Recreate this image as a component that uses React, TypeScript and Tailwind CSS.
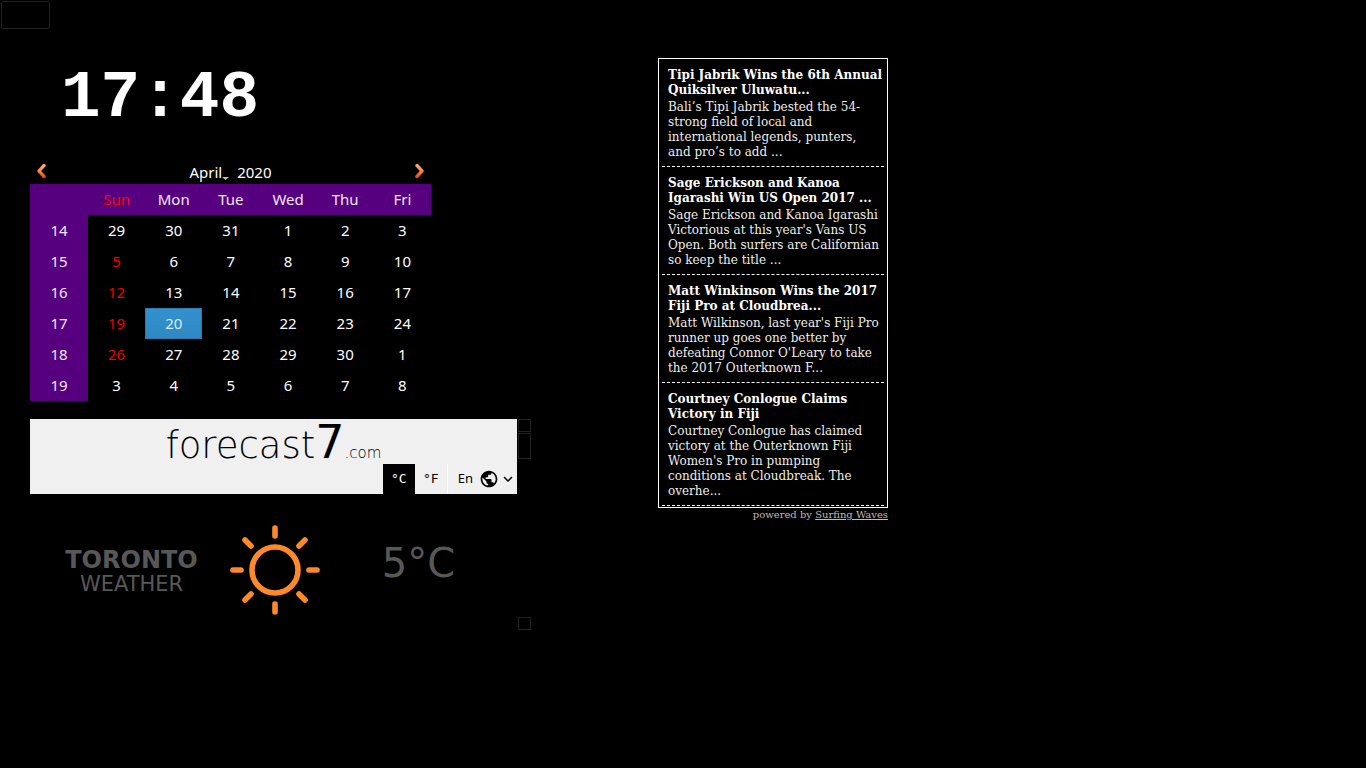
import { MdExpandMore, MdPublic } from "react-icons/md";

const days = ["Sun", "Mon", "Tue", "Wed", "Thu", "Fri"];

const weeks = [
  { week: 14, dates: [29, 30, 31, 1, 2, 3] },
  { week: 15, dates: [5, 6, 7, 8, 9, 10] },
  { week: 16, dates: [12, 13, 14, 15, 16, 17] },
  { week: 17, dates: [19, 20, 21, 22, 23, 24] },
  { week: 18, dates: [26, 27, 28, 29, 30, 1] },
  { week: 19, dates: [3, 4, 5, 6, 7, 8] },
];

const stories = [
  {
    title: "Tipi Jabrik Wins the 6th Annual Quiksilver Uluwatu...",
    body: "Bali’s Tipi Jabrik bested the 54-strong field of local and international legends, punters, and pro’s to add ...",
  },
  {
    title: "Sage Erickson and Kanoa Igarashi Win US Open 2017 ...",
    body: "Sage Erickson and Kanoa Igarashi Victorious at this year's Vans US Open. Both surfers are Californian so keep the title ...",
  },
  {
    title: "Matt Winkinson Wins the 2017 Fiji Pro at Cloudbrea...",
    body: "Matt Wilkinson, last year's Fiji Pro runner up goes one better by defeating Connor O'Leary to take the 2017 Outerknown F...",
  },
  {
    title: "Courtney Conlogue Claims Victory in Fiji",
    body: "Courtney Conlogue has claimed victory at the Outerknown Fiji Women's Pro in pumping conditions at Cloudbreak. The overhe...",
  },
];

function Chevron({ id, d }: { id: string; d: string }) {
  return (
    <svg width="12" height="16" viewBox="0 0 12 16" fill="none">
      <defs>
        <linearGradient id={id} x1="0" y1="0" x2="0" y2="16" gradientUnits="userSpaceOnUse">
          <stop offset="0" stopColor="#fbc08a" />
          <stop offset="0.5" stopColor="#f58a4a" />
          <stop offset="1" stopColor="#d63f10" />
        </linearGradient>
      </defs>
      <path d={d} stroke="#7a2c10" strokeWidth="4" strokeLinecap="round" strokeLinejoin="round" />
      <path d={d} stroke={`url(#${id})`} strokeWidth="3" strokeLinecap="round" strokeLinejoin="round" />
    </svg>
  );
}

function Calendar() {
  return (
    <section className="w-[401px] font-['Noto_Sans',sans-serif] text-[15px] text-white">
      <div className="flex h-6 items-center justify-between px-1.5">
        <button type="button" aria-label="Previous month" className="pb-0.5">
          <Chevron id="prev" d="M8 2.5 L3 8 L8 13.5" />
        </button>
        <div className="flex items-center gap-2">
          <button type="button" className="flex items-end">
            April
            <svg width="7" height="6" viewBox="0 0 7 6">
              <path d="M0 0H7L3.5 3Z" fill="#bdbdbd" />
            </svg>
          </button>
          <span>2020</span>
        </div>
        <button type="button" aria-label="Next month" className="pb-0.5">
          <Chevron id="next" d="M4 2.5 L9 8 L4 13.5" />
        </button>
      </div>
      <table className="w-full table-fixed border-collapse text-center">
        <thead>
          <tr className="h-[31px] bg-[#560080]">
            <th className="w-[58px] p-0" />
            {days.map((day) => (
              <th key={day} className={day === "Sun" ? "p-0 font-normal text-[#ff0000]" : "p-0 font-normal text-[#f0e8f5]"}>
                {day}
              </th>
            ))}
          </tr>
        </thead>
        <tbody>
          {weeks.map(({ week, dates }) => (
            <tr key={week} className="h-[31px]">
              <th className="bg-[#560080] p-0 font-normal text-[#f0e8f5]">{week}</th>
              {dates.map((date, i) => {
                const red = i === 0 && week > 14 && week < 19;
                const today = week === 17 && date === 20;
                return (
                  <td key={i} className={red ? "p-0 text-[#f00000]" : "p-0"}>
                    {today ? (
                      <div className="flex h-[31px] items-center justify-center border border-[#2a7ab0] bg-linear-to-b from-[#3391ce] to-[#2e89c2] text-[#d9ecf8]">
                        {date}
                      </div>
                    ) : (
                      date
                    )}
                  </td>
                );
              })}
            </tr>
          ))}
        </tbody>
      </table>
    </section>
  );
}

function Sun() {
  return (
    <svg width="90" height="90" viewBox="0 0 90 90" fill="none" stroke="#fc8a2b" strokeWidth="5.6" strokeLinecap="round">
      <circle cx="45" cy="45" r="23" />
      <path d="M45 3V11M45 79V87M3 45H11M79 45H87M15 15L21 21M69 69L75 75M15 75L21 69M69 21L75 15" />
    </svg>
  );
}

function Weather() {
  return (
    <section className="flex gap-px">
      <div className="w-[487px]">
        <header className="bg-[#f0f0f0] text-black">
          <h2 className="flex h-[45px] items-baseline justify-center font-['DejaVu_Sans',sans-serif] leading-[46px] font-extralight">
            <span className="text-[37px]">forecast</span>
            <span className="text-[46px] font-normal">7</span>
            <span className="text-[15px]">.com</span>
          </h2>
          <div className="flex h-[30px] justify-end font-['Noto_Sans',sans-serif] text-[13px]">
            <button type="button" className="w-8 bg-black font-['DejaVu_Sans_Mono',monospace] text-white">°C</button>
            <button type="button" className="w-8 font-['DejaVu_Sans_Mono',monospace]">°F</button>
            <button type="button" className="flex items-center border-l border-white pl-2.5">
              En
              <MdPublic className="ml-1.5 size-5" />
              <MdExpandMore className="size-[18px]" />
            </button>
          </div>
        </header>
        <div className="grid h-[136px] grid-cols-[1fr_90px_1fr] pt-[31px] pl-[3px] text-center font-['DejaVu_Sans',sans-serif] text-[#585858]">
          <h3 className="pt-[23px]">
            <span className="block text-[24px] leading-6 font-bold">TORONTO</span>
            <span className="block text-[21px] leading-6">WEATHER</span>
          </h3>
          <Sun />
          <p className="pt-4 text-[40px] leading-[44px]">5°C</p>
        </div>
      </div>
      <div className="flex w-[13px] flex-col gap-px">
        <div className="h-[13px] border border-[#222]" />
        <div className="h-[26px] border border-[#222]" />
        <div className="mt-auto h-[13px] border border-[#222]" />
      </div>
    </section>
  );
}

function News() {
  return (
    <section className="w-[230px] font-['DejaVu_Serif',serif] text-[12px] leading-[15px]">
      <div className="border border-white px-[3px] pb-px">
        {stories.map((story) => (
          <article key={story.title} className="border-b border-dashed border-white pt-[9px] pb-1.5 pl-1.5">
            <h3 className="font-bold text-white">{story.title}</h3>
            <p className="pt-0.5 pr-1 text-[#eeeeee]">{story.body}</p>
          </article>
        ))}
      </div>
      <p className="text-right text-[10px] leading-[14px] text-[#bbb]">
        powered by{" "}
        <a href="#" className="underline">
          Surfing Waves
        </a>
      </p>
    </section>
  );
}

export default function App() {
  return (
    <main className="min-h-screen bg-black p-px">
      <div className="h-7 w-[49px] rounded-[2px] border border-[#222]" />
      <div className="flex items-start gap-[127px] pt-[29px] pl-[29px]">
        <div className="flex flex-col">
          <time className="pl-[31px] font-['Liberation_Mono',monospace] text-[66px] leading-[82px] font-bold text-white">17:48</time>
          <div className="pt-5">
            <Calendar />
          </div>
          <div className="pt-[18px]">
            <Weather />
          </div>
        </div>
        <News />
      </div>
    </main>
  );
}
